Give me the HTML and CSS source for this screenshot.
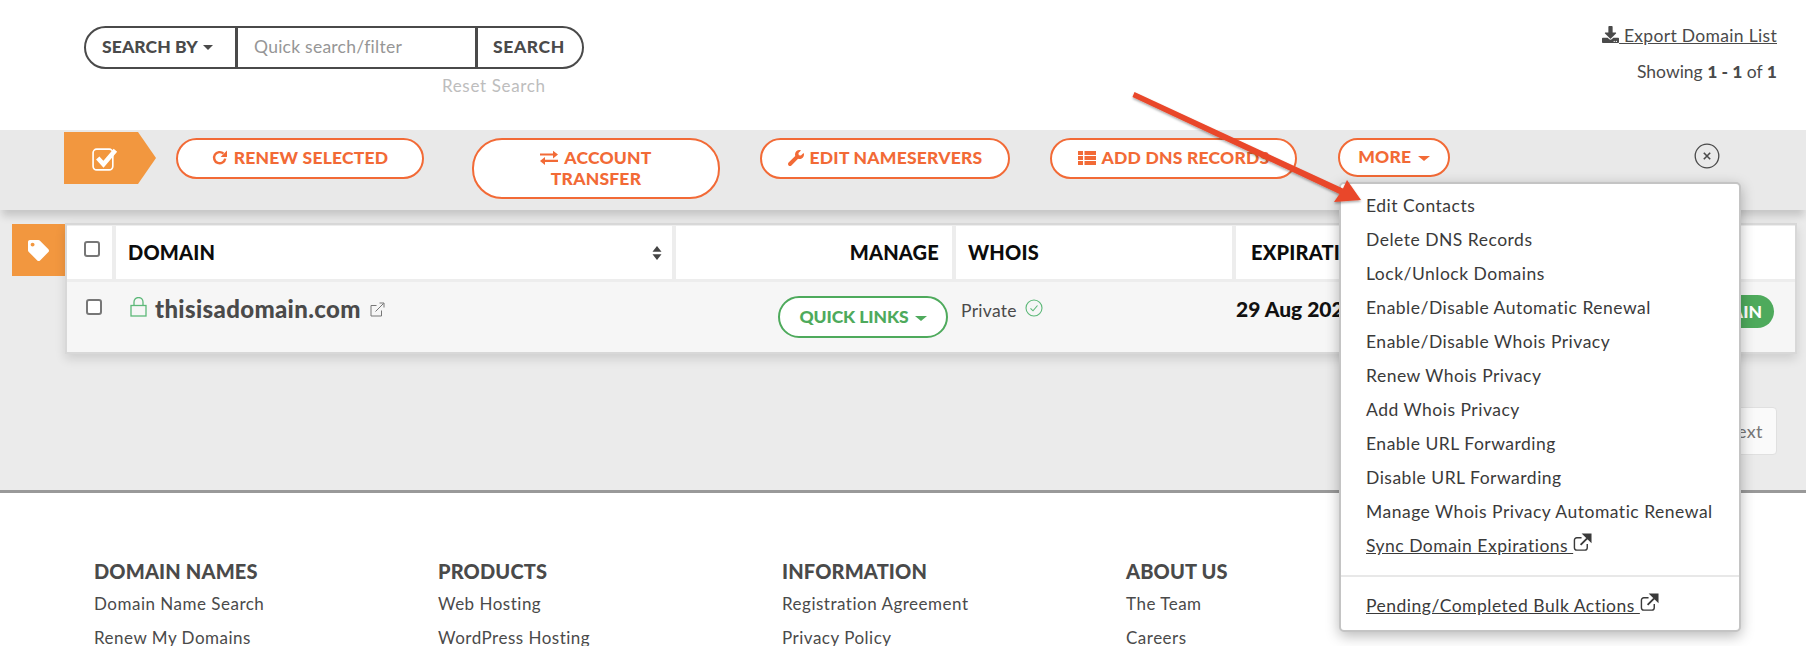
FILE: index.html
```html
<!DOCTYPE html>
<html lang="en">
<head>
<meta charset="utf-8">
<title>Domain List</title>
<link rel="stylesheet" href="styles.css">
</head>
<body>
<div class="page">
  <header class="top">
    <div class="search-wrap">
      <div class="search">
        <div class="search-by">SEARCH BY <span class="caret"></span></div>
        <div class="search-input">Quick search/filter</div>
        <div class="search-go">SEARCH</div>
      </div>
      <a class="reset">Reset Search</a>
    </div>
    <div class="top-right">
      <a class="export"><svg class="ic-dl" viewBox="0 0 512 512"><path d="M216 0h80c13.3 0 24 10.7 24 24v168h87.7c17.8 0 26.7 21.5 14.1 34.1L269.7 378.3c-7.5 7.5-19.8 7.5-27.3 0L90.1 226.1c-12.6-12.6-3.7-34.1 14.1-34.1H192V24c0-13.3 10.7-24 24-24zm296 376v112c0 13.3-10.7 24-24 24H24c-13.3 0-24-10.7-24-24V376c0-13.3 10.7-24 24-24h146.7l49 49c20.1 20.1 52.5 20.1 72.6 0l49-49H488c13.3 0 24 10.7 24 24zm-124 88c0-11-9-20-20-20s-20 9-20 20 9 20 20 20 20-9 20-20zm64 0c0-11-9-20-20-20s-20 9-20 20 9 20 20 20 20-9 20-20z"/></svg> Export Domain List</a>
      <div class="showing">Showing <b>1 - 1</b> of <b>1</b></div>
    </div>
  </header>

  <section class="toolbar">
    <div class="flag"><svg class="ic-check" viewBox="0 0 26 26"><rect x="2" y="4" width="19" height="20" rx="3.5" fill="none" stroke="#fff" stroke-width="1.6"/><path d="M6.5 12.5l5.5 6L23.5 5" fill="none" stroke="#fff" stroke-width="4.4"/></svg></div>
    <button class="btn b-renew"><svg class="ic" viewBox="0 0 16 16"><path d="M13.2 8.6A5.6 5.6 0 1 1 11.5 3.6" fill="none" stroke="currentColor" stroke-width="2.4"/><path d="M15 0.6v6.4H8.6z" fill="currentColor"/></svg>RENEW SELECTED</button>
    <button class="btn b-transfer"><svg class="ic ic-wide" viewBox="0 0 18 16"><path d="M0 3.7h13V1l5 3.9-5 3.9V5.9H0zM18 10.1H5V7.400l-5 3.900 5 3.900v-2.900h13z" fill="currentColor" transform="translate(0 -0.300)"/></svg>ACCOUNT TRANSFER</button>
    <button class="btn b-ns"><svg class="ic" viewBox="0 0 512 512"><path fill="currentColor" d="M507.73 109.1c-2.24-9.03-13.54-12.09-20.12-5.51l-74.36 74.36-67.88-11.31-11.31-67.88 74.36-74.36c6.62-6.62 3.43-17.9-5.66-20.16-47.38-11.74-99.55.91-136.58 37.93-39.64 39.64-50.55 97.1-34.05 147.2L18.74 402.76c-24.99 24.99-24.99 65.51 0 90.5 24.99 24.99 65.51 24.99 90.5 0l213.21-213.21c50.12 16.71 107.47 5.68 147.37-34.22 37.07-37.07 49.7-89.32 37.91-136.73z"/></svg>EDIT NAMESERVERS</button>
    <button class="btn b-dns"><svg class="ic ic-wide" viewBox="0 0 18 16"><path fill="currentColor" d="M0 1h5v4H0zM6.500 1H18v4H6.500zM0 6h5v4H0zM6.500 6H18v4H6.500zM0 11h5v4H0zM6.500 11H18v4H6.500z"/></svg>ADD DNS RECORDS</button>
    <div class="more-wrap">
      <button class="btn b-more">MORE <span class="caret caret-or"></span></button>
      <div class="menu">
        <ul class="menu-list">
          <li>Edit Contacts</li>
          <li>Delete DNS Records</li>
          <li>Lock/Unlock Domains</li>
          <li>Enable/Disable Automatic Renewal</li>
          <li>Enable/Disable Whois Privacy</li>
          <li>Renew Whois Privacy</li>
          <li>Add Whois Privacy</li>
          <li>Enable URL Forwarding</li>
          <li>Disable URL Forwarding</li>
          <li>Manage Whois Privacy Automatic Renewal</li>
          <li><a class="u">Sync Domain Expirations </a><svg class="ic-ext" viewBox="0 0 20 20"><path d="M15 11.500v4a2.500 2.500 0 0 1-2.500 2.500H4a2.500 2.500 0 0 1-2.500-2.500V7.500A2.500 2.500 0 0 1 4 5h5" fill="none" stroke="#3a3a3a" stroke-width="1.500"/><path d="M8 12.500L17 3.500M11.500 1.500h7v7z" fill="#3a3a3a" stroke="#3a3a3a" stroke-width="2"/></svg></li>
        </ul>
        <div class="menu-sep"></div>
        <div class="menu-foot"><a class="u">Pending/Completed Bulk Actions </a><svg class="ic-ext" viewBox="0 0 20 20"><path d="M15 11.500v4a2.500 2.500 0 0 1-2.500 2.500H4a2.500 2.500 0 0 1-2.500-2.500V7.500A2.500 2.500 0 0 1 4 5h5" fill="none" stroke="#3a3a3a" stroke-width="1.500"/><path d="M8 12.500L17 3.500M11.500 1.500h7v7z" fill="#3a3a3a" stroke="#3a3a3a" stroke-width="2"/></svg></div>
      </div>
    </div>
    <svg class="close" viewBox="0 0 26 26"><circle cx="13" cy="13" r="11.800" fill="none" stroke="#4a4a4a" stroke-width="1.300"/><path d="M9.800 9.800l6.400 6.400M16.200 9.800l-6.400 6.400" stroke="#4a4a4a" stroke-width="1.600"/></svg>
  </section>

  <main class="main">
    <div class="list">
      <div class="tagflag"><svg class="ic-tag" viewBox="0 0 512 512"><path fill="#fff" d="M0 252.118V48C0 21.49 21.49 0 48 0h204.118a48 48 0 0 1 33.941 14.059l211.882 211.882c18.745 18.745 18.745 49.137 0 67.882L293.823 497.941c-18.745 18.745-49.137 18.745-67.882 0L14.059 286.059A48 48 0 0 1 0 252.118zM112 64c-26.51 0-48 21.49-48 48s21.490 48 48 48 48-21.490 48-48-21.490-48-48-48z"/></svg></div>
      <div class="table">
        <div class="thead">
          <div class="th th-check"><span class="cb"></span></div>
          <div class="th th-domain">DOMAIN<svg class="sort" viewBox="0 0 10 14"><path d="M5 0l4.500 5.800H.5z" fill="#444"/><path d="M5 14L.5 8.200h9z" fill="#444"/></svg></div>
          <div class="th th-manage">MANAGE</div>
          <div class="th">WHOIS</div>
          <div class="th th-exp">EXPIRATION</div>
        </div>
        <div class="trow">
          <div class="td td-check"><span class="cb"></span></div>
          <div class="td td-domain">
            <svg class="ic-lock" viewBox="0 0 17 20"><rect x="1" y="8.500" width="15" height="10.500" fill="none" stroke="#5cb878" stroke-width="1.300"/><path d="M4 8.500V5a4.500 4.500 0 0 1 9 0v3.500" fill="none" stroke="#5cb878" stroke-width="1.300"/></svg>
            <span class="dname">thisisadomain.com</span>
            <svg class="ic-out" viewBox="0 0 15 15"><path d="M11.500 8.500v5.500h-10.500V3.500h5.500" fill="none" stroke="#777" stroke-width="1"/><path d="M5.500 9.500l8-8M9.500 1h4.500v4.500" fill="none" stroke="#777" stroke-width="1"/></svg>
          </div>
          <div class="td td-manage"><button class="btn-green">QUICK LINKS <span class="caret caret-gr"></span></button></div>
          <div class="td td-whois">Private <svg class="ic-ok" viewBox="0 0 18 18"><circle cx="9" cy="9" r="8" fill="none" stroke="#5cb878" stroke-width="1.100"/><path d="M5.500 9.300l2.500 2.500 4.500-5.300" fill="none" stroke="#5cb878" stroke-width="1.100"/></svg></div>
          <div class="td td-exp"><b class="date">29 Aug 2022</b><span class="pill">RENEW DOMAIN</span></div>
        </div>
      </div>
    </div>
    <div class="pager"><button class="next">Next</button></div>
  </main>

  <footer class="footer">
    <div class="fcol"><h4>DOMAIN NAMES</h4><a>Domain Name Search</a><a>Renew My Domains</a></div>
    <div class="fcol"><h4>PRODUCTS</h4><a>Web Hosting</a><a>WordPress Hosting</a></div>
    <div class="fcol"><h4>INFORMATION</h4><a>Registration Agreement</a><a>Privacy Policy</a></div>
    <div class="fcol"><h4>ABOUT US</h4><a>The Team</a><a>Careers</a></div>
  </footer>

  <svg class="arrow" viewBox="0 0 240 120" width="240" height="120">
    <defs><filter id="sh" x="-10%" y="-10%" width="120%" height="130%"><feDropShadow dx="0" dy="1.500" stdDeviation="1.200" flood-color="#000" flood-opacity=".35"/></filter></defs>
    <path filter="url(#sh)" fill="#e9472a" d="M2.500 7L4.500 2L213 98.500L217 90L231 110L204 112L209.500 104z"/>
  </svg>
</div>
</body>
</html>
```
FILE: styles.css
```css
* { box-sizing: border-box; }
html, body { margin: 0; height: 646px; overflow: hidden; }
body { font-family: "Lato", "Liberation Sans", sans-serif; color: #4a4a4a; background: #fff; }
.page { position: relative; width: 1806px; height: 646px; overflow: hidden; }
button { font-family: inherit; cursor: pointer; }

/* top */
.top { height: 130px; display: flex; justify-content: space-between; padding: 26px 29px 0 84px; }
.search-wrap { display: flex; flex-direction: column; width: 500px; }
.search { display: flex; height: 43px; border: 2px solid #4a4a4a; border-radius: 22px; width: 500px; }
.search-by { width: 152px; border-right: 3px solid #4a4a4a; font-weight: 900; font-size: 17.500px; letter-spacing: .1px; padding-left: 16px; line-height: 37px; white-space: nowrap; }
.search-input { width: 240px; border-right: 3px solid #4a4a4a; color: #969696; font-size: 17.500px; letter-spacing: .25px; padding-left: 16px; line-height: 37px; }
.search-go { flex: 1; font-weight: 900; font-size: 17.500px; letter-spacing: .6px; padding-left: 15px; line-height: 37px; }
.caret { display: inline-block; border-left: 5px solid transparent; border-right: 5px solid transparent; border-top: 5px solid #4a4a4a; vertical-align: 3px; margin-left: 2px; }
.reset { align-self: flex-start; margin: 5px 0 0 358px; color: #bdbdbd; font-size: 17px; letter-spacing: .65px; line-height: 24px; white-space: nowrap; }
.top-right { text-align: right; font-size: 17.500px; letter-spacing: .32px; }
.export { display: block; line-height: 22px; margin-top: -1px; text-decoration: underline; }
.ic-dl { width: 17px; height: 17px; fill: #4a4a4a; vertical-align: -1px; }
.showing { margin-top: 14px; line-height: 22px; letter-spacing: 0; }
.showing b { font-weight: 900; }

/* toolbar */
.toolbar { position: relative; height: 80px; background: #e9e9e9; display: flex; align-items: flex-start; padding: 8px 0 0 64px; box-shadow: 0 8px 8px -2px rgba(0,0,0,.16); z-index: 2; }
.flag { width: 92px; height: 52px; margin-top: -6px; background: #f2973f; clip-path: polygon(0 0, 74px 0, 100% 50%, 74px 100%, 0 100%); display: flex; align-items: center; padding-left: 27px; }
.ic-check { width: 27px; height: 27px; }
.btn { height: 41px; border: 2px solid #f26a36; border-radius: 21px; background: #fff; color: #f26a36; font-weight: 900; font-size: 17.500px; letter-spacing: .22px; line-height: 21px; padding: 0 8px 2px; white-space: normal; flex: none; }
.ic { width: 16px; height: 16px; margin-right: 6px; vertical-align: -2px; }
.ic-wide { width: 18px; }
.b-renew { width: 248px; margin-left: 20px; }
.b-transfer { width: 248px; height: 61px; margin-left: 48px; padding: 0 34px 2px; border-radius: 30px; }
.b-ns { width: 250px; margin-left: 40px; }
.b-dns { width: 247px; margin-left: 40px; }
.more-wrap { position: relative; margin-left: 41px; }
.b-more { width: 112px; height: 39px; border-radius: 20px; display: block; }
.caret-or { border-top-color: #f26a36; border-left-width: 6px; border-right-width: 6px; vertical-align: 2px; }
.close { position: absolute; left: 1694px; top: 13px; width: 26px; height: 26px; }

/* menu */
.menu { position: absolute; left: 1px; top: 44px; width: 402px; height: 450px; background: #fff; border: 2px solid #c4c4c4; border-radius: 5px; box-shadow: 0 4px 14px rgba(0,0,0,.28); color: #3a3a3a; font-size: 17.500px; letter-spacing: .5px; z-index: 5; }
.menu-list { list-style: none; margin: 0; padding: 5px 0 0 25px; }
.menu-list li { height: 34px; line-height: 34px; white-space: nowrap; }
.menu-sep { height: 2px; background: #e8e8e8; margin-top: 12px; }
.menu-foot { padding: 12px 0 0 25px; line-height: 34px; white-space: nowrap; }
.u { text-decoration: underline; white-space: pre; }
.ic-ext { width: 19px; height: 19px; vertical-align: 0; margin-left: 0; }

/* main */
.main { position: relative; height: 283px; background: #ebebeb; border-bottom: 3px solid #999; padding: 13px 0 0 12px; }
.list { display: flex; align-items: flex-start; }
.tagflag { width: 53px; height: 52px; margin-top: 1px; background: #f2973f; display: flex; align-items: center; justify-content: center; }
.ic-tag { width: 21px; height: 21px; }
.table { width: 1732px; height: 131px; background: #f6f6f6; border: 2px solid #d8d8d8; box-shadow: 0 5px 10px rgba(0,0,0,.12); }
.thead, .trow { display: grid; grid-template-columns: 45px 556px 276px 276px 1fr; column-gap: 4px; }
.thead { background: #ededed; height: 57px; padding: 1px 0 3px; }
.th { background: #fff; font-weight: 900; font-size: 20px; color: #0c0c0c; line-height: 53px; padding-left: 12px; position: relative; letter-spacing: .2px; }
.th-check { padding: 0; }
.th-manage { text-align: right; padding: 0 13px 0 0; }
.th-exp { padding-left: 15px; white-space: nowrap; overflow: hidden; }
.sort { position: absolute; right: 10px; top: 20px; width: 10px; height: 14px; }
.cb { display: block; width: 16px; height: 16px; border: 2px solid #777; border-radius: 3px; background: #fff; }
.th-check .cb { margin: 15px 0 0 17px; }
.td-check .cb { margin: 17px 0 0 19px; }
.trow { height: 70px; }
.td { min-width: 0; }
.td-domain { display: flex; align-items: center; height: 56px; padding: 0 0 0 14px; }
.ic-lock { width: 17px; height: 20px; margin-top: -6px; }
.dname { font-weight: 900; font-size: 24px; letter-spacing: .35px; color: #4a4a4a; margin: -3px 0 0 8px; }
.ic-out { width: 15px; height: 15px; margin: -2px 0 0 9px; }
.td-manage { padding: 14px 0 0 102px; }
.btn-green { width: 170px; height: 42px; border: 2px solid #4eaa5c; border-radius: 21px; background: #fff; color: #4eaa5c; font-weight: 900; font-size: 17.500px; letter-spacing: -.1px; padding: 0 0 2px; white-space: nowrap; }
.caret-gr { border-top-color: #4eaa5c; border-left-width: 6px; border-right-width: 6px; vertical-align: 2px; }
.td-whois { padding: 17px 0 0 5px; font-size: 17.500px; letter-spacing: .3px; line-height: 24px; }
.ic-ok { width: 18px; height: 18px; margin-left: 3px; vertical-align: 0; }
.td-exp { position: relative; padding: 15px 0 0 0; font-size: 21px; color: #111; line-height: 24px; white-space: nowrap; }
.date { font-weight: 900; letter-spacing: 0; }
.pill { position: absolute; right: 21px; top: 13px; height: 33px; padding: 0 12px; background: #4eaa5c; color: #fff; border-radius: 17px; font-size: 17.500px; font-weight: 900; line-height: 33px; }
.pager { position: absolute; right: 29px; top: 197px; }
.next { width: 82px; height: 48px; border: 1px solid #e0e0e0; border-radius: 4px; background: #fafafa; color: #777; font-size: 18px; letter-spacing: .3px; padding: 0 0 0 14px; text-align: center; }

/* footer */
.footer { display: grid; grid-template-columns: repeat(4, 344px); padding: 66px 0 0 94px; }
.fcol h4 { margin: 0; font-size: 20px; font-weight: 900; letter-spacing: .15px; line-height: 24px; color: #4a4a4a; }
.fcol a { display: block; font-size: 17px; letter-spacing: .5px; line-height: 24px; margin-top: 10px; }
.fcol h4 + a { margin-top: 9px; }

/* annotation */
.arrow { position: absolute; left: 1130px; top: 90px; z-index: 10; }
```
